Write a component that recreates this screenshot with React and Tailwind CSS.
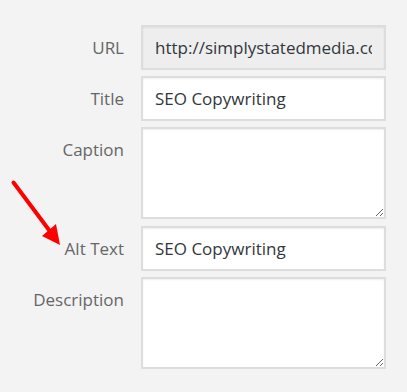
export default function App() {
  const box =
    "w-full border-2 border-[#dddddd] px-3 text-[17px] text-[#32373c] shadow-[inset_0_1px_2px_rgba(0,0,0,0.07)] outline-none";
  const label = "h-[45px] text-right text-[17px] leading-[45px] text-[#666]";

  return (
    <div className="relative min-h-[392px] w-[407px] bg-[#f3f3f3] pt-[25px] font-['Open_Sans',sans-serif]">
      <div className="grid grid-cols-[124px_245px] gap-x-[17px]">
        <label className={label}>URL</label>
        <input
          readOnly
          value="http://simplystatedmedia.com/wp-content/uploads/seo-copywriting.jpg"
          className={`${box} h-[45px] bg-[#eeeeee]`}
        />

        <label className={`${label} mt-[6px]`}>Title</label>
        <input readOnly value="SEO Copywriting" className={`${box} mt-[6px] h-[45px] bg-white`} />

        <label className={`${label} mt-[6px]`}>Caption</label>
        <textarea readOnly className={`${box} mt-[6px] block h-[92px] bg-white py-2`} />

        <label className={`${label} mt-[7px]`}>Alt Text</label>
        <input readOnly value="SEO Copywriting" className={`${box} mt-[7px] h-[45px] bg-white`} />

        <label className={`${label} mt-[6px]`}>Description</label>
        <textarea readOnly className={`${box} mt-[6px] block h-[92px] bg-white py-2`} />
      </div>

      {/* red annotation arrow */}
      <svg className="absolute left-0 top-0" width="407" height="392" viewBox="0 0 407 392">
        <line x1="13.5" y1="182.5" x2="49" y2="230" stroke="#ff0000" strokeWidth="4" strokeLinecap="round" />
        <polygon points="60,245 42,236 56,224" fill="#ff0000" />
      </svg>
    </div>
  );
}
